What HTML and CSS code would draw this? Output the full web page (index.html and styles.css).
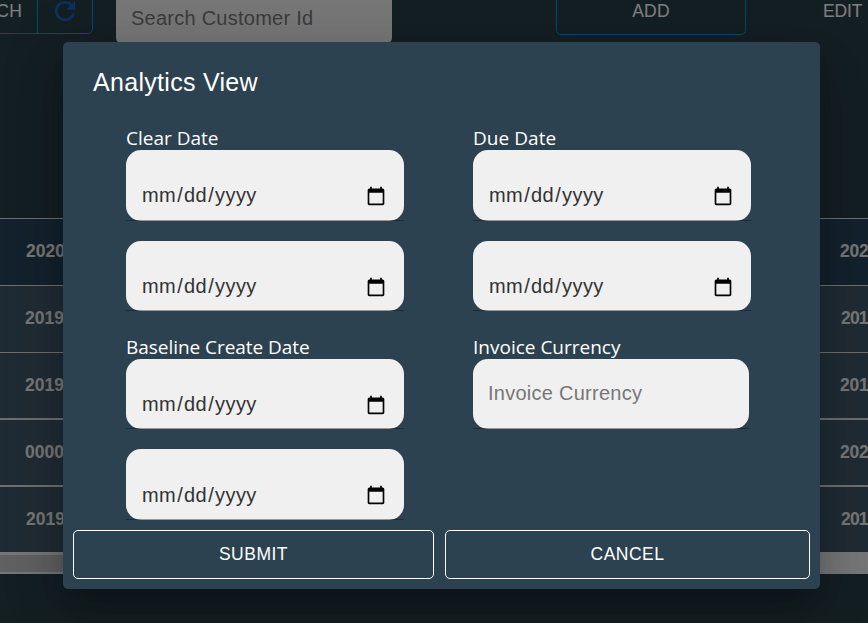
FILE: index.html
```html
<!DOCTYPE html>
<html lang="en">
<head>
<meta charset="utf-8">
<title>Analytics View</title>
<link rel="stylesheet" href="styles.css">
</head>
<body>
<svg class="defs" width="0" height="0"><symbol id="cal" viewBox="0 0 24 24"><path d="M20 3h-1V1h-2v2H7V1H5v2H4c-1.1 0-2 .9-2 2v16c0 1.100.9 2 2 2h16c1.100 0 2-.9 2-2V5c0-1.100-.9-2-2-2zm0 18H4V8h16v13z"/></symbol></svg>
<div class="page">
  <header class="toolbar">
    <div class="group">
      <span class="group-item search">SEARCH</span>
      <span class="group-item refresh"><svg width="30" height="30" viewBox="0 0 24 24"><path d="M17.65 6.35C16.2 4.9 14.21 4 12 4c-4.42 0-7.99 3.58-7.99 8s3.57 8 7.99 8c3.73 0 6.84-2.55 7.73-6h-2.08c-.82 2.33-3.04 4-5.65 4-3.31 0-6-2.69-6-6s2.69-6 6-6c1.66 0 3.14.69 4.22 1.78L13 11h7V4l-2.35 2.35z"/></svg></span>
    </div>
    <div class="customer">Search Customer Id</div>
    <div class="add">ADD</div>
    <div class="edit">EDIT</div>
  </header>
  <main class="table">
    <div class="row first"><span>2020</span><span class="end">202</span></div>
    <div class="row"><span class="out">2019</span><span class="end in">201</span></div>
    <div class="row short"><span class="out">2019</span><span class="end">201</span></div>
    <div class="row thick"><span class="out">0000</span><span class="end">202</span></div>
    <div class="row thick"><span>2019</span><span class="end in">201</span></div>
    <div class="scrollbar"><div class="thumb"></div></div>
  </main>
</div>
<div class="backdrop">
  <section class="dialog" role="dialog" aria-labelledby="title">
    <h2 id="title">Analytics View</h2>
    <div class="fields">
      <div class="column">
        <div class="label clear">Clear Date</div>
        <div class="line"><div class="field"><span class="date"><span>mm</span>/<span>dd</span>/<span>yyyy</span></span><svg class="cal"><use href="#cal"/></svg></div></div>
        <div class="line second"><div class="field"><span class="date"><span>mm</span>/<span>dd</span>/<span>yyyy</span></span><svg class="cal"><use href="#cal"/></svg></div></div>
        <div class="label baseline">Baseline Create Date</div>
        <div class="line low"><div class="field"><span class="date"><span>mm</span>/<span>dd</span>/<span>yyyy</span></span><svg class="cal"><use href="#cal"/></svg></div></div>
        <div class="line last"><div class="field"><span class="date"><span>mm</span>/<span>dd</span>/<span>yyyy</span></span><svg class="cal"><use href="#cal"/></svg></div></div>
      </div>
      <div class="column">
        <div class="label due">Due Date</div>
        <div class="line"><div class="field"><span class="date"><span>mm</span>/<span>dd</span>/<span>yyyy</span></span><svg class="cal"><use href="#cal"/></svg></div></div>
        <div class="line second"><div class="field"><span class="date"><span>mm</span>/<span>dd</span>/<span>yyyy</span></span><svg class="cal"><use href="#cal"/></svg></div></div>
        <div class="label invoice">Invoice Currency</div>
        <div class="line low narrow"><div class="field currency">Invoice Currency</div></div>
      </div>
    </div>
    <div class="actions">
      <button class="submit">SUBMIT</button>
      <button class="cancel">CANCEL</button>
    </div>
  </section>
</div>
</body>
</html>
```
FILE: styles.css
```css
* { box-sizing: border-box; }
body {
  margin: 0;
  height: 623px;
  overflow: hidden;
  background: #293f49;
  font-family: "Liberation Sans", Arial, sans-serif;
}
.defs { display: block; }
.page { height: 623px; overflow: hidden; }

.toolbar {
  display: flex;
  align-items: flex-start;
  height: 218px;
  margin-left: -73px;
  color: #fff;
  font-size: 17.5px;
  letter-spacing: 0.2px;
  line-height: 22px;
}
.group {
  display: flex;
  width: 166px;
  height: 49px;
  margin-top: -15px;
  border: 1px solid #0098d8;
  border-radius: 5px;
}
.group-item { display: flex; align-items: center; }
.search { width: 110px; padding: 3px 15px 0 0; justify-content: flex-end; border-right: 1px solid #0098d8; }
.refresh { width: 54px; padding-top: 2px; justify-content: center; }
.refresh svg { fill: #1265cc; }
.customer {
  width: 276px;
  height: 68px;
  margin: -25px 0 0 23px;
  padding: 32px 15px 0;
  border-radius: 5px;
  background: #efefef;
  color: #777;
  font-size: 20px;
  letter-spacing: 0.25px;
}
.add {
  width: 190px;
  height: 50px;
  margin: -15px 0 0 164px;
  padding-top: 14px;
  border: 1px solid #0098d8;
  border-radius: 5px;
  text-align: center;
}
.edit { margin-left: 77px; white-space: nowrap; letter-spacing: -0.1px; }

.table { font-weight: bold; font-size: 17.5px; color: #efefef; }
.row {
  display: flex;
  align-items: center;
  justify-content: space-between;
  height: 67px;
  padding: 0 0 2px 26px;
  border-top: 1px solid #dedede;
  background: #40596a;
  overflow: hidden;
}
.row.first { background: #29455a; }
.row.short { height: 66px; padding-bottom: 0; }
.row.thick { border-top-width: 2px; padding-bottom: 0; }
.out { margin-left: -1px; }
.end { width: 28px; white-space: nowrap; letter-spacing: -0.2px; }
.end.in { width: 27px; letter-spacing: -0.8px; }
.scrollbar { height: 22px; padding: 3px 0 2px; background: #efefef; }
.thumb { width: 600px; height: 17px; background: #c3c3c3; }

.backdrop {
  position: absolute;
  inset: 0;
  display: flex;
  align-items: flex-start;
  padding: 42px 48px 0 63px;
  background: rgba(0, 0, 0, 0.5);
  overflow: hidden;
}
.dialog {
  width: 757px;
  height: 547px;
  border-radius: 5px;
  background: #2d4250;
  color: #fff;
  box-shadow: 0 14px 19px -9px rgba(0,0,0,.2), 0 30px 48px 4px rgba(0,0,0,.14), 0 11px 58px 10px rgba(0,0,0,.12);
}
h2 {
  height: 84px;
  margin: 0;
  padding: 20px 30px 0;
  font-size: 25px;
  font-weight: 500;
  letter-spacing: 0.3px;
  line-height: 40px;
}
.fields { display: flex; gap: 69px; height: 394px; padding-left: 63px; }
.column { width: 278px; }
.label {
  height: 24px;
  font-family: "Open Sans", "Noto Sans", sans-serif;
  font-size: 19px;
  line-height: 24px;
  white-space: nowrap;
}
.baseline, .invoice { margin-top: 24px; }
.baseline { letter-spacing: -0.04px; }
.due { letter-spacing: 0.05px; }
.line {
  height: 71px;
  background: linear-gradient(#1c2b34, #1c2b34) bottom / 100% 1px no-repeat;
}
.field {
  display: flex;
  align-items: flex-start;
  justify-content: space-between;
  height: 100%;
  padding: 33px 18px 0 15px;
  border-radius: 15px;
  background: linear-gradient(#999, #999) bottom / 100% 1px no-repeat #f0f0f0;
  color: #333;
  font-size: 20px;
  line-height: 24px;
  letter-spacing: 0.4px;
}
.second { height: 70px; margin-top: 20px; }
.low { height: 70px; }
.last { height: 71px; margin-top: 20px; }
.last .field { padding-top: 34px; }
.last .cal { margin-top: 1.5px; }
.narrow { width: 276px; }
.date span { padding: 0 1px; }
.cal { width: 20px; height: 20px; margin-top: 2.5px; fill: #000; }
.field.currency { padding-top: 22px; color: #777; letter-spacing: 0.26px; }
.actions { display: flex; gap: 11px; margin: 10px 10px 0; }
button {
  height: 49px;
  padding: 0;
  border: 1px solid #fff;
  border-radius: 5px;
  background: transparent;
  color: #fff;
  font: 500 17.5px "Liberation Sans", Arial, sans-serif;
  letter-spacing: 0.5px;
}
.submit { width: 361px; }
.cancel { width: 365px; }
```
